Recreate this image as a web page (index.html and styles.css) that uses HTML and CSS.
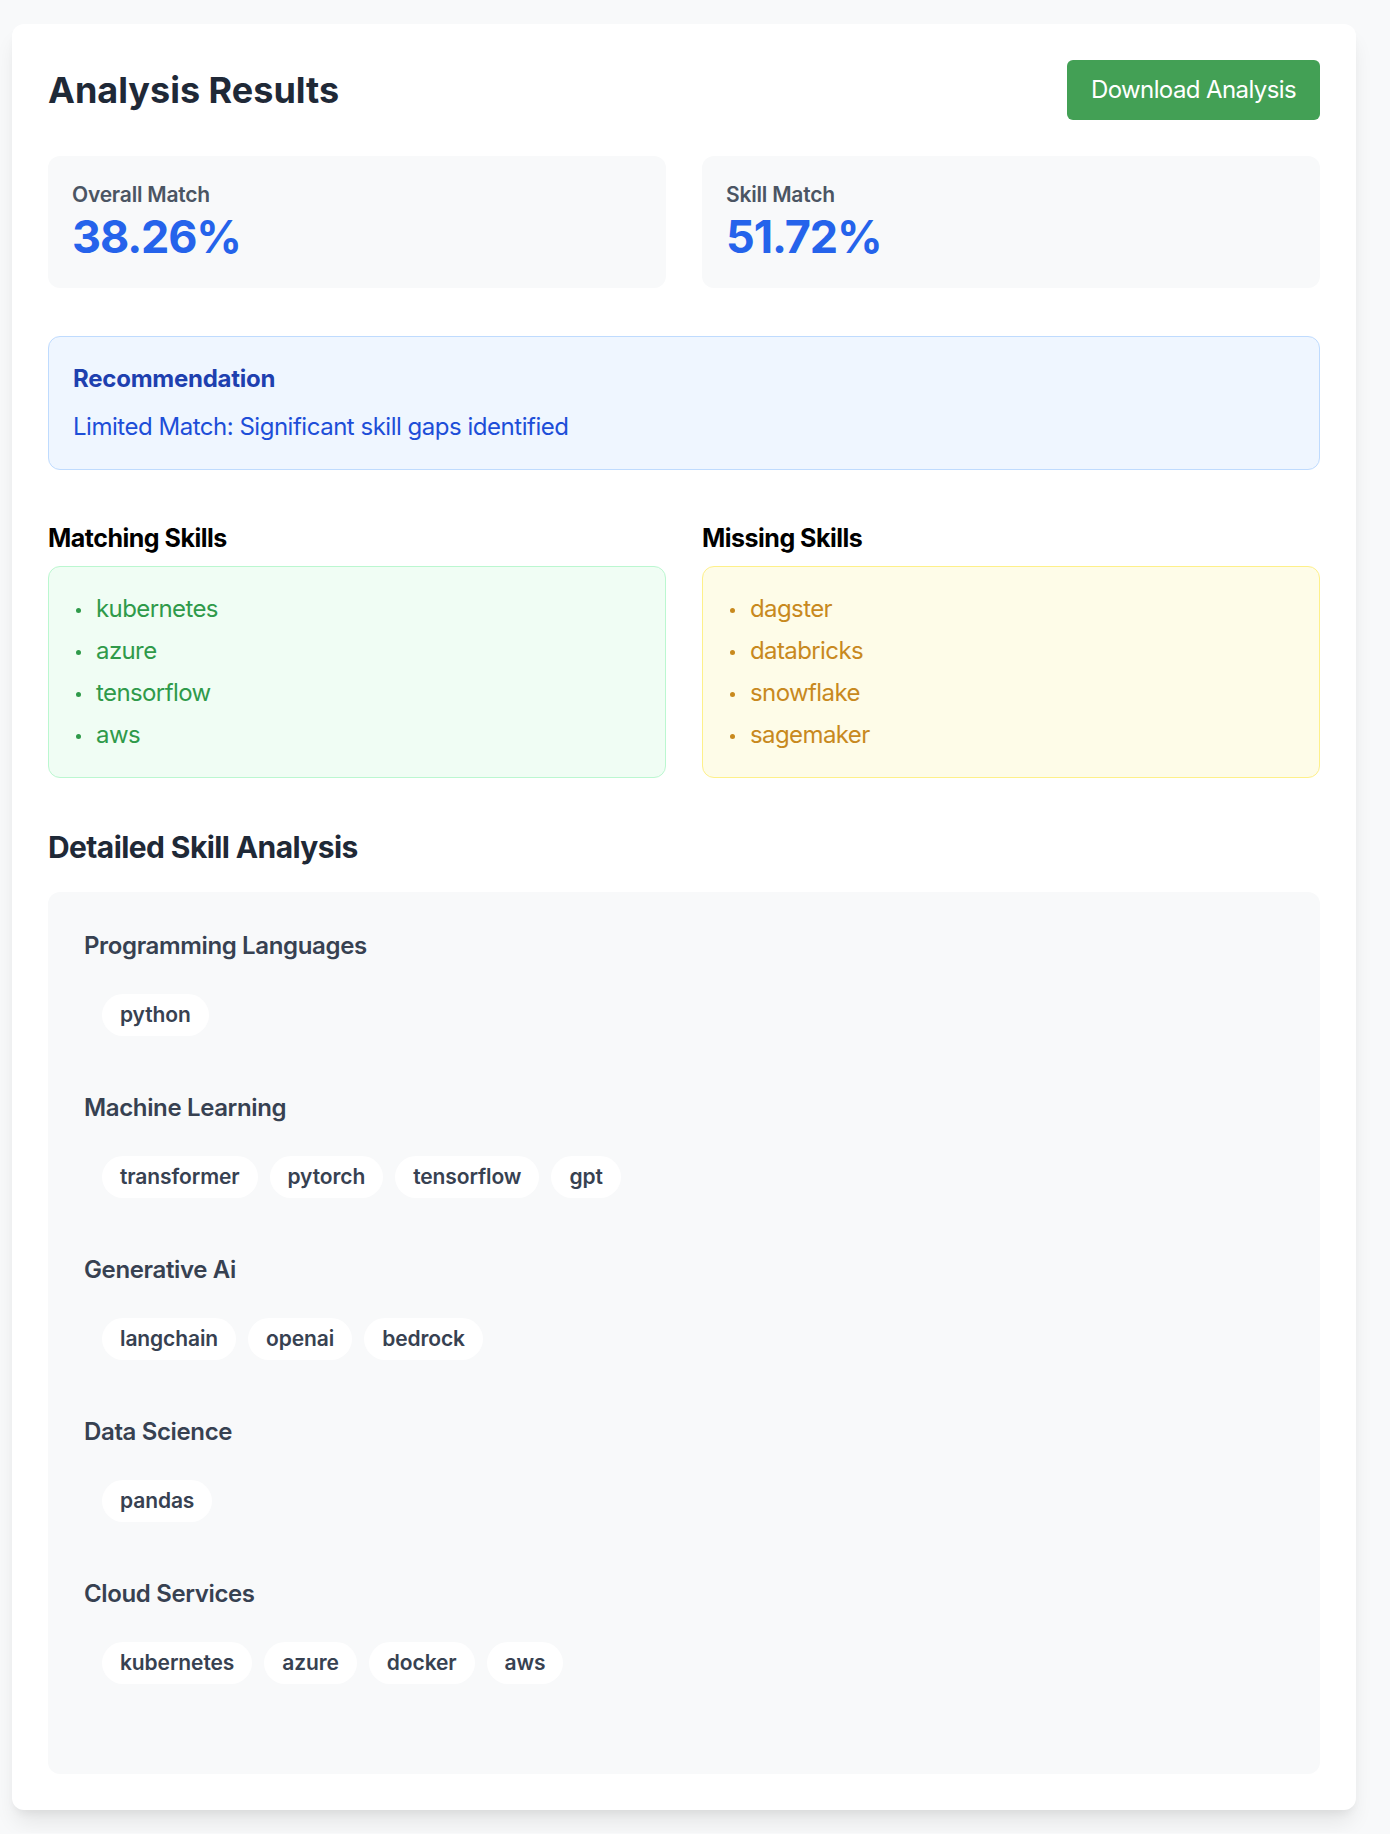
FILE: index.html
```html
<!DOCTYPE html>
<html lang="en">
<head>
<meta charset="utf-8">
<title>Analysis Results</title>
<link rel="stylesheet" href="styles.css">
</head>
<body>
<div class="wrap">
  <div class="card">
    <div class="header">
      <h1 class="title">Analysis Results</h1>
      <button class="btn">Download Analysis</button>
    </div>

    <div class="stats">
      <div class="stat">
        <div class="stat-label">Overall Match</div>
        <div class="stat-value">38.26%</div>
      </div>
      <div class="stat">
        <div class="stat-label">Skill Match</div>
        <div class="stat-value">51.72%</div>
      </div>
    </div>

    <div class="reco">
      <h3 class="reco-title">Recommendation</h3>
      <p class="reco-text">Limited Match: Significant skill gaps identified</p>
    </div>

    <div class="lists">
      <div class="list-col">
        <h3 class="list-title">Matching Skills</h3>
        <div class="list-box list-green">
          <ul class="skill-list">
            <li>kubernetes</li>
            <li>azure</li>
            <li>tensorflow</li>
            <li>aws</li>
          </ul>
        </div>
      </div>
      <div class="list-col">
        <h3 class="list-title">Missing Skills</h3>
        <div class="list-box list-yellow">
          <ul class="skill-list">
            <li>dagster</li>
            <li>databricks</li>
            <li>snowflake</li>
            <li>sagemaker</li>
          </ul>
        </div>
      </div>
    </div>

    <h2 class="section-title">Detailed Skill Analysis</h2>
    <div class="detail">
      <div class="cat">
        <h4 class="cat-title">Programming Languages</h4>
        <div class="pills">
          <span class="pill">python</span>
        </div>
      </div>
      <div class="cat">
        <h4 class="cat-title">Machine Learning</h4>
        <div class="pills">
          <span class="pill">transformer</span>
          <span class="pill">pytorch</span>
          <span class="pill">tensorflow</span>
          <span class="pill">gpt</span>
        </div>
      </div>
      <div class="cat">
        <h4 class="cat-title">Generative Ai</h4>
        <div class="pills">
          <span class="pill">langchain</span>
          <span class="pill">openai</span>
          <span class="pill">bedrock</span>
        </div>
      </div>
      <div class="cat">
        <h4 class="cat-title">Data Science</h4>
        <div class="pills">
          <span class="pill">pandas</span>
        </div>
      </div>
      <div class="cat">
        <h4 class="cat-title">Cloud Services</h4>
        <div class="pills">
          <span class="pill">kubernetes</span>
          <span class="pill">azure</span>
          <span class="pill">docker</span>
          <span class="pill">aws</span>
        </div>
      </div>
    </div>
  </div>
</div>
</body>
</html>
```

FILE: styles.css
```css
* { box-sizing: border-box; }

html, body {
  margin: 0;
  padding: 0;
  background: #f8f9fa;
  font-family: Inter, "Liberation Sans", sans-serif;
  -webkit-font-smoothing: antialiased;
}

.wrap {
  width: 1344px;
  margin: 24px 0 0 12px;
  padding-bottom: 23px;
}

.card {
  background: #ffffff;
  border-radius: 12px;
  padding: 36px;
  box-shadow: 0 15px 22px -4px rgba(0, 0, 0, 0.09), 0 6px 9px -3px rgba(0, 0, 0, 0.05);
}

.header {
  display: flex;
  justify-content: space-between;
  align-items: center;
  margin-bottom: 36px;
}

.title {
  margin: 0;
  font-size: 36px;
  line-height: 40px;
  font-weight: 700;
  color: #1f2937;
  letter-spacing: 0;
}

.btn {
  border: 0;
  background: #43a055;
  color: #ffffff;
  font-family: inherit;
  font-size: 24px;
  line-height: 36px;
  padding: 12px 24px;
  border-radius: 6px;
  letter-spacing: -0.025em;
}

.stats {
  display: grid;
  grid-template-columns: 1fr 1fr;
  gap: 36px;
  margin-bottom: 48px;
}

.stat {
  background: #f8f9fa;
  border-radius: 12px;
  padding: 24px;
}

.stat-label {
  font-size: 21px;
  line-height: 30px;
  font-weight: 600;
  color: #4b5563;
  letter-spacing: -0.01em;
}

.stat-value {
  font-size: 45px;
  line-height: 54px;
  font-weight: 700;
  color: #2563eb;
  letter-spacing: -0.025em;
}

.reco {
  background: #eff6ff;
  border: 1px solid #bfdbfe;
  border-radius: 12px;
  padding: 24px;
  margin-bottom: 48px;
}

.reco-title {
  margin: 0 0 12px;
  font-size: 24px;
  line-height: 36px;
  font-weight: 700;
  color: #1e40af;
  letter-spacing: -0.01em;
}

.reco-text {
  margin: 0;
  font-size: 24px;
  line-height: 36px;
  color: #1d4ed8;
  letter-spacing: -0.02em;
}

.lists {
  display: grid;
  grid-template-columns: 1fr 1fr;
  gap: 36px;
  margin-bottom: 48px;
}

.list-title {
  margin: 0 0 8px;
  font-size: 25px;
  line-height: 40px;
  font-weight: 700;
  color: #000000;
  letter-spacing: -0.02em;
}

.list-box {
  border: 1px solid;
  border-radius: 12px;
  padding: 24px;
}

.list-green {
  background: #f0fdf4;
  border-color: #bbf7d0;
  color: #2f9a4a;
}

.list-yellow {
  background: #fefce8;
  border-color: #fef08a;
  color: #c8891e;
}

.skill-list {
  list-style: none;
  margin: 0;
  padding: 0;
  display: flex;
  flex-direction: column;
  gap: 6px;
}

.skill-list li {
  display: flex;
  align-items: center;
  font-size: 24px;
  line-height: 36px;
  letter-spacing: -0.025em;
}

.skill-list li::before {
  content: "";
  width: 5px;
  height: 5px;
  border-radius: 50%;
  background: currentColor;
  margin: 2px 15px 0 3px;
  flex: none;
}

.section-title {
  margin: 0 0 24px;
  font-size: 30px;
  line-height: 42px;
  font-weight: 700;
  color: #1f2937;
  letter-spacing: -0.02em;
}

.detail {
  background: #f8f9fa;
  border-radius: 12px;
  padding: 36px;
}

.cat {
  margin-bottom: 36px;
}

.cat-title {
  margin: 0 0 12px;
  font-size: 24px;
  line-height: 36px;
  font-weight: 600;
  color: #374151;
  letter-spacing: -0.015em;
}

.pills {
  display: flex;
  flex-wrap: wrap;
  gap: 12px;
  padding: 18px;
}

.pill {
  background: #ffffff;
  border-radius: 9999px;
  padding: 6px 18px;
  font-size: 21px;
  line-height: 30px;
  font-weight: 600;
  color: #374151;
  letter-spacing: -0.005em;
}
```
